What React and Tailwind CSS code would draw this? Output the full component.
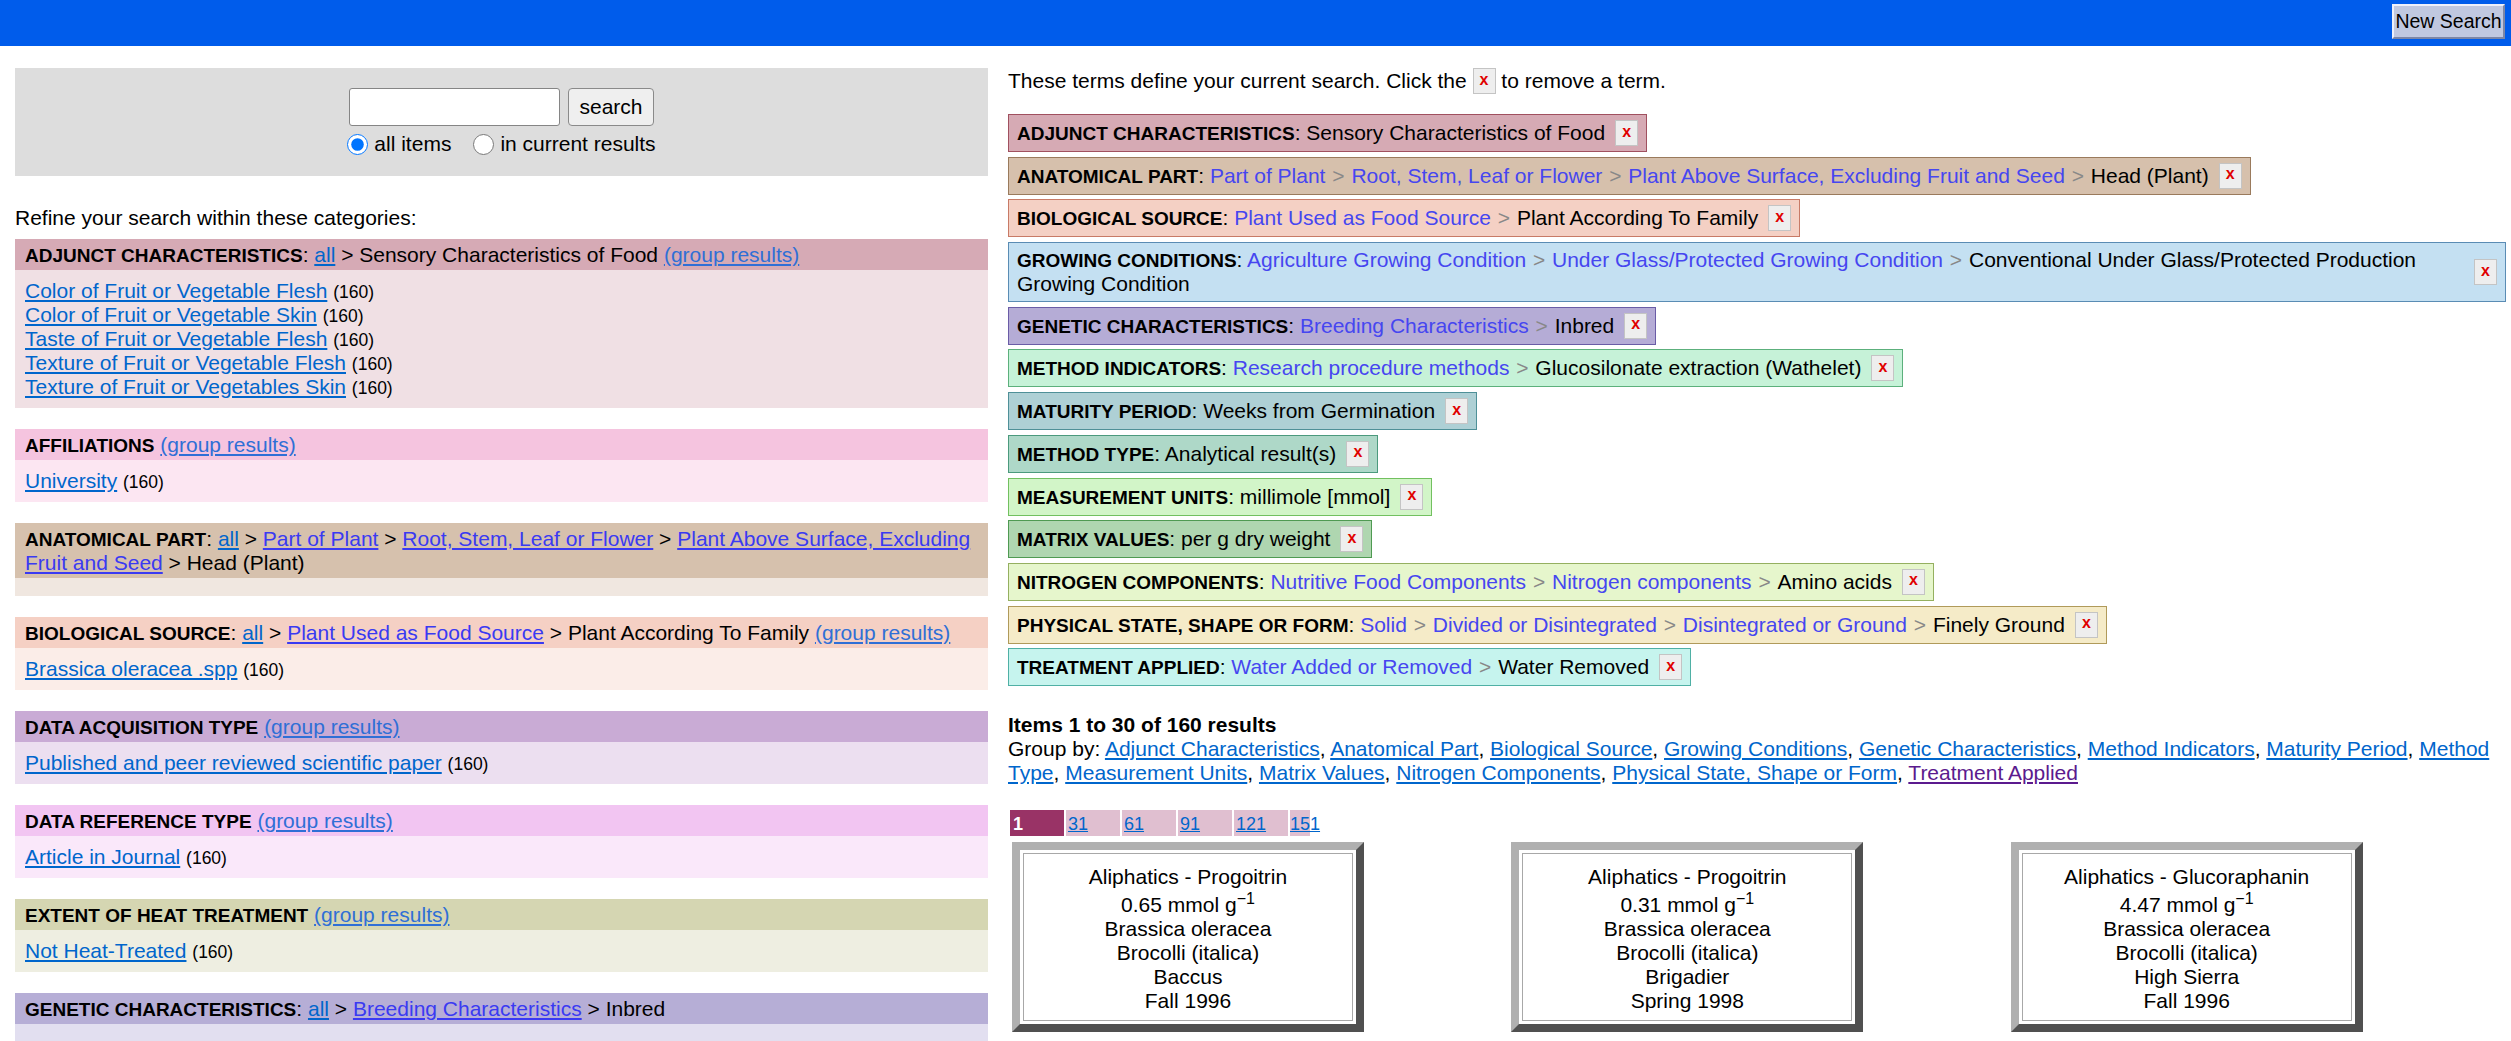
import React from 'react';

const leftCats = [
  {
    label: 'ADJUNCT CHARACTERISTICS',
    head: 'bg-[#d6aab5]',
    body: 'bg-[#f0e0e4]',
    hier: true,
    crumbs: [],
    final: 'Sensory Characteristics of Food',
    group: true,
    items: [
      'Color of Fruit or Vegetable Flesh',
      'Color of Fruit or Vegetable Skin',
      'Taste of Fruit or Vegetable Flesh',
      'Texture of Fruit or Vegetable Flesh',
      'Texture of Fruit or Vegetables Skin',
    ],
  },
  {
    label: 'AFFILIATIONS',
    head: 'bg-[#f5c4df]',
    body: 'bg-[#fce6f2]',
    hier: false,
    group: true,
    items: ['University'],
  },
  {
    label: 'ANATOMICAL PART',
    head: 'bg-[#d6c1ad]',
    body: 'bg-[#f0e7e0]',
    hier: true,
    crumbs: ['Part of Plant', 'Root, Stem, Leaf or Flower', 'Plant Above Surface, Excluding Fruit and Seed'],
    final: 'Head (Plant)',
    group: false,
    items: [],
  },
  {
    label: 'BIOLOGICAL SOURCE',
    head: 'bg-[#f5d0c4]',
    body: 'bg-[#fbede8]',
    hier: true,
    crumbs: ['Plant Used as Food Source'],
    final: 'Plant According To Family',
    group: true,
    items: ['Brassica oleracea .spp'],
  },
  {
    label: 'DATA ACQUISITION TYPE',
    head: 'bg-[#c9abd5]',
    body: 'bg-[#ecdff0]',
    hier: false,
    group: true,
    items: ['Published and peer reviewed scientific paper'],
  },
  {
    label: 'DATA REFERENCE TYPE',
    head: 'bg-[#f2c5f2]',
    body: 'bg-[#fae8fa]',
    hier: false,
    group: true,
    items: ['Article in Journal'],
  },
  {
    label: 'EXTENT OF HEAT TREATMENT',
    head: 'bg-[#d5d6b2]',
    body: 'bg-[#eeeee1]',
    hier: false,
    group: true,
    items: ['Not Heat-Treated'],
  },
  {
    label: 'GENETIC CHARACTERISTICS',
    head: 'bg-[#b6aed6]',
    body: 'bg-[#e2dff0]',
    hier: true,
    crumbs: ['Breeding Characteristics'],
    final: 'Inbred',
    group: false,
    items: [],
  },
];

const terms = [
  { label: 'ADJUNCT CHARACTERISTICS', links: [], value: 'Sensory Characteristics of Food', cls: 'bg-[#d6aab4] border-[#a0505f]' },
  { label: 'ANATOMICAL PART', links: ['Part of Plant', 'Root, Stem, Leaf or Flower', 'Plant Above Surface, Excluding Fruit and Seed'], value: 'Head (Plant)', cls: 'bg-[#d6c0ac] border-[#9a7a5c]' },
  { label: 'BIOLOGICAL SOURCE', links: ['Plant Used as Food Source'], value: 'Plant According To Family', cls: 'bg-[#f4d0c4] border-[#c87a66]' },
  { label: 'GROWING CONDITIONS', links: ['Agriculture Growing Condition', 'Under Glass/Protected Growing Condition'], value: 'Conventional Under Glass/Protected Production Growing Condition', cls: 'bg-[#c4e0f2] border-[#5a8cb4]', wide: true },
  { label: 'GENETIC CHARACTERISTICS', links: ['Breeding Characteristics'], value: 'Inbred', cls: 'bg-[#b5acd6] border-[#6a5ca6]' },
  { label: 'METHOD INDICATORS', links: ['Research procedure methods'], value: 'Glucosilonate extraction (Wathelet)', cls: 'bg-[#c6f2d8] border-[#5cb07c]' },
  { label: 'MATURITY PERIOD', links: [], value: 'Weeks from Germination', cls: 'bg-[#aed0d5] border-[#4f9098]' },
  { label: 'METHOD TYPE', links: [], value: 'Analytical result(s)', cls: 'bg-[#aed8c8] border-[#4b9a7d]' },
  { label: 'MEASUREMENT UNITS', links: [], value: 'millimole [mmol]', cls: 'bg-[#d2f5c8] border-[#72c060]' },
  { label: 'MATRIX VALUES', links: [], value: 'per g dry weight', cls: 'bg-[#afd6b0] border-[#4f9a52]' },
  { label: 'NITROGEN COMPONENTS', links: ['Nutritive Food Components', 'Nitrogen components'], value: 'Amino acids', cls: 'bg-[#e6f6cc] border-[#95b060]' },
  { label: 'PHYSICAL STATE, SHAPE OR FORM', links: ['Solid', 'Divided or Disintegrated', 'Disintegrated or Ground'], value: 'Finely Ground', cls: 'bg-[#f5ebc8] border-[#b09a5a]' },
  { label: 'TREATMENT APPLIED', links: ['Water Added or Removed'], value: 'Water Removed', cls: 'bg-[#c6f4ee] border-[#4fb0a5]' },
];

const groupBy = [
  'Adjunct Characteristics', 'Anatomical Part', 'Biological Source', 'Growing Conditions',
  'Genetic Characteristics', 'Method Indicators', 'Maturity Period', 'Method Type',
  'Measurement Units', 'Matrix Values', 'Nitrogen Components', 'Physical State, Shape or Form',
  'Treatment Applied',
];

const cards = [
  { name: 'Aliphatics - Progoitrin', val: '0.65', sp: 'Brassica oleracea', vr: 'Brocolli (italica)', cv: 'Baccus', season: 'Fall 1996' },
  { name: 'Aliphatics - Progoitrin', val: '0.31', sp: 'Brassica oleracea', vr: 'Brocolli (italica)', cv: 'Brigadier', season: 'Spring 1998' },
  { name: 'Aliphatics - Glucoraphanin', val: '4.47', sp: 'Brassica oleracea', vr: 'Brocolli (italica)', cv: 'High Sierra', season: 'Fall 1996' },
];

function XBox() {
  return (
    <span className="inline-flex w-[23px] h-[26px] shrink-0 items-center justify-center bg-[#eeeeee] border border-[#c4c4c4] text-[#e00000] font-bold text-[16px] leading-none pb-[3px] align-middle">
      x
    </span>
  );
}

function Category({ c }) {
  return (
    <div className="mb-[21px]">
      <div className={`${c.head} px-[10px] pt-[4px] pb-[3px]`}>
        <b className="text-[19px] leading-[16px]">{c.label}</b>
        {c.hier && (
          <>
            : <a className="text-[#0066cc] underline">all</a>
            {c.crumbs.map((cr) => (
              <React.Fragment key={cr}>
                {' > '}
                <a className="text-[#3a3af2] underline">{cr}</a>
              </React.Fragment>
            ))}
            {' > '}
            {c.final}
          </>
        )}
        {c.group && (
          <>
            {' '}
            <a className="text-[#2f6fd6] underline">(group results)</a>
          </>
        )}
      </div>
      <div className={`${c.body} px-[10px] py-[9px]`}>
        {c.items.map((it) => (
          <div key={it} className="h-[24px]">
            <a className="text-[#0066cc] underline">{it}</a> <span className="text-[17.5px] leading-[16px]">(160)</span>
          </div>
        ))}
      </div>
    </div>
  );
}

function Term({ t }) {
  return (
    <div className={`${t.cls} border flex items-center px-[8px] py-[5px] ${t.wide ? 'w-full' : 'w-fit'}`}>
      <div className={t.wide ? 'flex-1' : ''}>
        <b className="text-[19px] leading-[16px]">{t.label}</b>:{' '}
        {t.links.map((l) => (
          <React.Fragment key={l}>
            <span className="text-[#4646f0]">{l}</span>
            <span className="text-[#888888] px-[1px]"> &gt; </span>
          </React.Fragment>
        ))}
        {t.value}
      </div>
      <div className="ml-[10px] flex">
        <XBox />
      </div>
    </div>
  );
}

function Card({ d }) {
  return (
    <div className="ml-[4px] w-[352px] border-[8px] border-t-[#b0b0b0] border-l-[#b0b0b0] border-b-[#505050] border-r-[#505050] bg-white p-[3px]">
      <div className="border border-[#a8a8a8] pt-[11px] pb-[7px] text-center">
        <div>{d.name}</div>
        <div className="pt-[4px]">
          {d.val} mmol g<span className="relative -top-[0.5em] text-[16px] leading-[16px]">&minus;1</span>
        </div>
        <div>{d.sp}</div>
        <div>{d.vr}</div>
        <div>{d.cv}</div>
        <div>{d.season}</div>
      </div>
    </div>
  );
}

export default function App() {
  return (
    <div className="w-[2511px] h-[1041px] overflow-hidden bg-white text-black text-[21px] leading-[24px] font-['Liberation_Sans',Arial,sans-serif]">
      <div className="h-[46px] bg-[#005ceb] flex justify-end items-start pt-[4px] pr-[6px]">
        <button className="w-[113px] h-[35px] bg-[#c0c8e0] border-2 border-t-[#eef0fa] border-l-[#eef0fa] border-b-[#7c86a6] border-r-[#7c86a6] text-[19.5px] text-black leading-none">
          New Search
        </button>
      </div>

      <div className="flex pt-[22px]">
        {/* left column */}
        <div className="ml-[15px] w-[973px] shrink-0">
          <div className="bg-[#dddddd] pt-[20px] pb-[20px] flex flex-col items-center">
            <div className="flex gap-[8px]">
              <input type="text" className="w-[211px] h-[38px] bg-white border border-[#858585] rounded-[3px]" />
              <button className="w-[86px] h-[38px] bg-[#efefef] border border-[#8a8a8a] rounded-[4px] text-[21px]">search</button>
            </div>
            <div className="mt-[6px] flex items-center h-[24px]">
              <input type="radio" name="scope" defaultChecked className="w-[21px] h-[21px] m-0 accent-[#0075ff]" />
              <span className="ml-[6px]">all items</span>
              <input type="radio" name="scope" className="w-[21px] h-[21px] m-0 ml-[22px]" />
              <span className="ml-[6px]">in current results</span>
            </div>
          </div>

          <div className="mt-[30px] mb-[9px]">Refine your search within these categories:</div>

          {leftCats.map((c) => (
            <Category key={c.label} c={c} />
          ))}
        </div>

        {/* right column */}
        <div className="ml-[20px] w-[1498px] shrink-0">
          <div className="h-[26px] flex items-center">
            These terms define your current search. Click the&nbsp;<XBox />&nbsp;to remove a term.
          </div>

          <div className="mt-[20px] flex flex-col items-start gap-[4.7px]">
            {terms.map((t) => (
              <Term key={t.label} t={t} />
            ))}
          </div>

          <div className="mt-[27px]">
            <b>Items 1 to 30 of 160 results</b>
            <div>
              Group by:{' '}
              {groupBy.map((g, i) => (
                <React.Fragment key={g}>
                  <a className={i === groupBy.length - 1 ? 'text-[#5b1a8e] underline' : 'text-[#0066cc] underline'}>{g}</a>
                  {i < groupBy.length - 1 ? ', ' : ''}
                </React.Fragment>
              ))}
            </div>
          </div>

          <div className="mt-[25px] ml-[2px] flex gap-[2px] text-[18px] leading-[21px]">
            <div className="w-[54px] h-[26px] pt-[4px] pl-[3px] bg-[#993366] text-white font-bold">1</div>
            {['31', '61', '91', '121'].map((p) => (
              <div key={p} className="w-[54px] h-[26px] pt-[4px] pl-[2px] bg-[#e0bfd0]">
                <a className="text-[#0066cc] underline">{p}</a>
              </div>
            ))}
            <div className="w-[20px] h-[26px] pt-[4px] bg-[#e0bfd0] whitespace-nowrap">
              <a className="text-[#0066cc] underline">151</a>
            </div>
          </div>

          <div className="mt-[6px] grid grid-cols-3">
            {cards.map((d, i) => (
              <div key={i}>
                <Card d={d} />
              </div>
            ))}
          </div>
        </div>
      </div>
    </div>
  );
}
